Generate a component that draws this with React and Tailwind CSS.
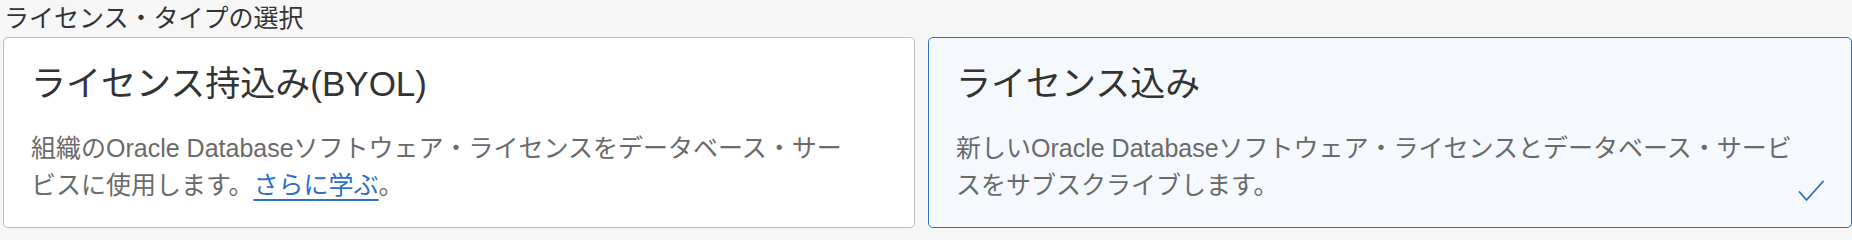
const font = { fontFamily: '"Liberation Sans", "Noto Sans CJK JP", sans-serif' };

function CheckMark() {
  return (
    <svg
      className="absolute right-[27px] bottom-[25px]"
      width="26"
      height="22"
      viewBox="0 0 26 22"
      fill="none"
      stroke="#2b6cc4"
      strokeWidth="1.8"
      strokeLinecap="round"
      strokeLinejoin="round"
    >
      <polyline points="1.5 12 8.5 20 25 1.5" />
    </svg>
  );
}

function LicenseCard({ title, selected, children }) {
  return (
    <div
      className={
        "relative flex flex-col rounded-[5px] border pt-[20px] pb-[23px] pl-[27px] pr-[40px] " +
        (selected ? "border-[#2e6fc4] bg-[#f5f9fe]" : "border-[#b9bec5] bg-white")
      }
    >
      <h3 className="text-[35px] leading-[52px] font-normal text-[#333]">{title}</h3>
      <p className="mt-[20px] text-[25px] leading-[37px] whitespace-nowrap text-[#6a6a6a]">{children}</p>
      {selected && <CheckMark />}
    </div>
  );
}

export default function App() {
  return (
    <div className="h-[240px] w-[1852px] overflow-hidden bg-[#f6f6f6]" style={font}>
      <div className="pl-[4px] text-[25px] leading-[37px] text-[#333]">ライセンス・タイプの選択</div>
      <div className="grid grid-cols-[912px_924px] gap-[13px] pl-[3px]">
        <LicenseCard title="ライセンス持込み(BYOL)">
          組織のOracle Databaseソフトウェア・ライセンスをデータベース・サー
          <br />
          ビスに使用します。
          <a href="#" className="text-[#2a6fc9] underline underline-offset-[5px] decoration-[1.5px]">
            さらに学ぶ
          </a>
          。
        </LicenseCard>
        <LicenseCard title="ライセンス込み" selected>
          新しいOracle Databaseソフトウェア・ライセンスとデータベース・サービ
          <br />
          スをサブスクライブします。
        </LicenseCard>
      </div>
    </div>
  );
}
